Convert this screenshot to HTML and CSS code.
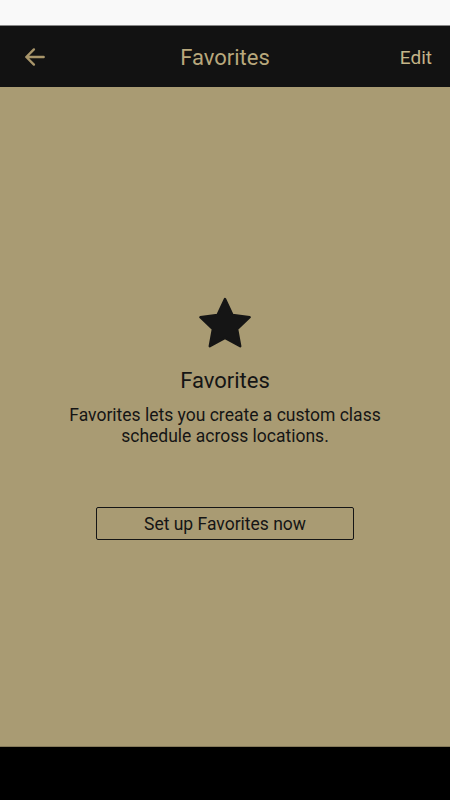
FILE: index.html
```html
<!DOCTYPE html>
<html lang="en">
<head>
<meta charset="UTF-8">
<meta name="viewport" content="width=device-width, initial-scale=1.0">
<title>Favorites</title>
<link rel="stylesheet" href="styles.css">
</head>
<body>

<div class="status-bar"></div>

<div class="toolbar">
  <button class="back-btn" aria-label="Back">
    <svg width="26" height="26" viewBox="0 0 24 24">
      <path d="M20 12H4M11 5l-7 7 7 7" fill="none" stroke="#a8956a" stroke-width="2.2" stroke-linecap="round" stroke-linejoin="round"/>
    </svg>
  </button>
  <h1 class="toolbar-title">Favorites</h1>
  <span class="edit-btn">Edit</span>
</div>

<div class="content">
  <div class="empty-state">
    <svg class="star" width="58" height="56" viewBox="0 0 24 23">
      <path d="M12 1.2l3.1 6.6 7.1.9-5.2 4.9 1.3 7.1L12 17.3l-6.3 3.4 1.3-7.1L1.8 8.7l7.1-.9z" fill="#151515" stroke="#151515" stroke-width="1" stroke-linejoin="round"/>
    </svg>
    <h2 class="empty-title">Favorites</h2>
    <p class="empty-text">Favorites lets you create a custom class schedule across locations.</p>
    <button class="setup-btn">Set up Favorites now</button>
  </div>
</div>

<div class="nav-bar"></div>

</body>
</html>
```

FILE: styles.css
```css
body {
  margin: 0;
  padding: 0;
  font-family: Roboto, "Noto Sans", Arial, sans-serif;
  height: 800px;
  display: flex;
  flex-direction: column;
  background-color: #000;
}
.status-bar {
  height: 26px;
  background-color: #f9f9f9;
  border-bottom: 1px solid #888;
  box-sizing: border-box;
}
.toolbar {
  height: 61px;
  background-color: #121212;
  display: flex;
  align-items: center;
  justify-content: space-between;
  padding: 0 18px 0 22px;
  position: relative;
}
.back-btn {
  background: none;
  border: none;
  padding: 0;
  width: 26px;
  height: 26px;
  cursor: pointer;
  display: flex;
}
.toolbar-title {
  position: absolute;
  left: 0;
  right: 0;
  text-align: center;
  margin: 0;
  font-size: 22px;
  font-weight: normal;
  color: #b8a87c;
  pointer-events: none;
  padding-top: 1px;
}
.edit-btn {
  font-size: 19px;
  color: #c4b488;
  padding-top: 1px;
}
.content {
  height: 660px;
  background-color: #a99b73;
  border-bottom: 1px solid #857a5a;
  box-sizing: border-box;
  display: flex;
  justify-content: center;
}
.empty-state {
  margin-top: 209px;
  display: flex;
  flex-direction: column;
  align-items: center;
  text-align: center;
  color: #151515;
}
.star {
  display: block;
}
.empty-title {
  margin: 16px 0 0;
  font-size: 22px;
  font-weight: normal;
  line-height: 26px;
}
.empty-text {
  margin: 11px 0 0;
  width: 340px;
  font-size: 17.5px;
  line-height: 21px;
}
.setup-btn {
  margin-top: 60px;
  width: 258px;
  height: 33px;
  background: none;
  border: 1px solid #151515;
  border-radius: 2px;
  font-family: inherit;
  font-size: 17.5px;
  color: #151515;
  cursor: pointer;
  padding: 0;
}
.nav-bar {
  flex: 1;
  background-color: #000;
}
```
